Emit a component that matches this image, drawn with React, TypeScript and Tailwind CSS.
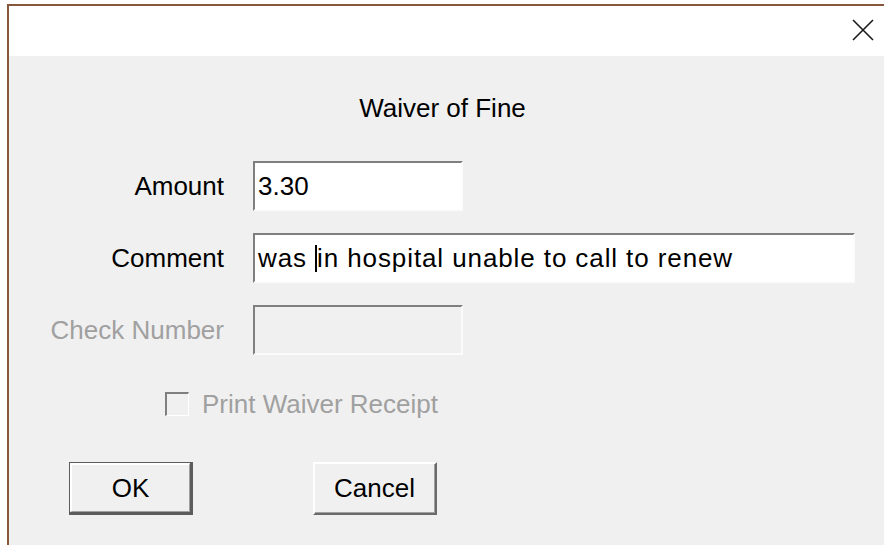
import React from "react";

const font = { fontFamily: '"Liberation Sans", Arial, sans-serif' };

function Sunken({ className, children }: { className: string; children?: React.ReactNode }) {
  return (
    <div
      className={
        "h-[50px] border-t-2 border-l-2 border-b-2 border-r-2 border-t-[#7f7f7f] border-l-[#7f7f7f] border-b-[#fbfbfb] border-r-[#fbfbfb] " +
        className
      }
    >
      {children}
    </div>
  );
}

export default function App() {
  return (
    <div className="w-[884px] h-[545px] bg-white pt-[4px] pl-[7px] overflow-hidden" style={font}>
      <div className="h-full border-t-2 border-l-2 border-[#86573a] flex flex-col">
        {/* title bar */}
        <div className="h-[50px] bg-white flex justify-end items-start pt-[13px] pr-[10px]">
          <svg width="22" height="22" viewBox="0 0 22 22">
            <path d="M1 1 L21 21 M21 1 L1 21" stroke="#1a1a1a" strokeWidth="1.6" fill="none" />
          </svg>
        </div>

        {/* dialog body */}
        <div className="flex-1 bg-[#f0f0f0] flex flex-col text-[26px] text-black leading-[30px]">
          <div className="mt-[37px] text-center pr-[8px]">Waiver of Fine</div>

          <div className="mt-[38px] grid grid-cols-[215px_auto] gap-x-[29px] gap-y-[22px] items-center">
            <div className="text-right">Amount</div>
            <Sunken className="w-[210px] bg-white flex items-center pl-[3px]">3.30</Sunken>

            <div className="text-right">Comment</div>
            <Sunken className="w-[602px] bg-white flex items-center pl-[3px] whitespace-pre tracking-[0.9px]">
              <span>was </span>
              <span className="inline-block w-[2px] h-[27px] bg-black" />
              <span>in hospital unable to call to renew</span>
            </Sunken>

            <div className="text-right text-[#a0a0a0]">Check Number</div>
            <Sunken className="w-[210px] bg-[#f0f0f0]" />
          </div>

          <div className="mt-[34px] pl-[156px] flex items-center gap-[13px] text-[#a0a0a0]">
            <div className="w-[24px] h-[24px] border-t-2 border-l-2 border-t-[#7f7f7f] border-l-[#7f7f7f] border-b border-r border-b-white border-r-white bg-[#f0f0f0]" />
            <span>Print Waiver Receipt</span>
          </div>

          <div className="mt-[43px] pl-[60px] flex gap-[120px]">
            <div className="w-[124px] h-[53px] border border-[#5c5c5c] border-b-[3px] border-r-[3px]">
              <div className="h-full border-t-2 border-l-2 border-b border-r border-t-white border-l-white border-b-[#a0a0a0] border-r-[#a0a0a0] bg-[#f0f0f0] flex items-center justify-center">
                OK
              </div>
            </div>
            <div className="w-[124px] h-[53px] border-t-2 border-l-2 border-b-2 border-r-2 border-t-white border-l-white border-b-[#6a6a6a] border-r-[#6a6a6a]">
              <div className="h-full border-b border-r border-b-[#a0a0a0] border-r-[#a0a0a0] bg-[#f0f0f0] flex items-center justify-center">
                Cancel
              </div>
            </div>
          </div>
        </div>
      </div>
    </div>
  );
}
